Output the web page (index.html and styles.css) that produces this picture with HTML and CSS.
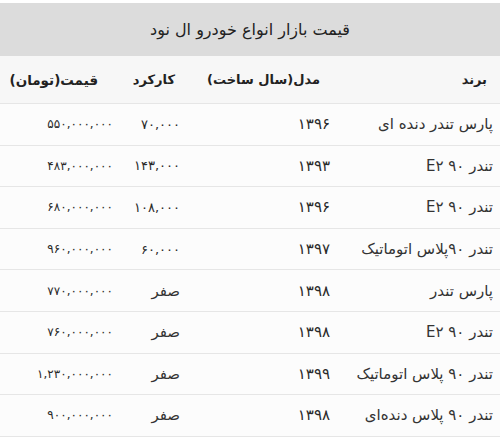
FILE: index.html
```html
<!DOCTYPE html>
<html lang="fa" dir="rtl">
<head>
<meta charset="utf-8">
<title>قیمت بازار انواع خودرو ال نود</title>
<link rel="stylesheet" href="styles.css">
</head>
<body>
<div class="table">
  <div class="title">قیمت بازار انواع خودرو ال نود</div>
  <div class="row head">
    <div class="c brand">برند</div>
    <div class="c model">مدل(سال ساخت)</div>
    <div class="c km">کارکرد</div>
    <div class="c price">قیمت(تومان)</div>
  </div>
  <div class="row">
    <div class="c brand">پارس تندر دنده ای</div>
    <div class="c model num">۱۳۹۶</div>
    <div class="c km num">۷۰,۰۰۰</div>
    <div class="c price num">۵۵۰,۰۰۰,۰۰۰</div>
  </div>
  <div class="row">
    <div class="c brand">تندر ۹۰ E۲</div>
    <div class="c model num">۱۳۹۳</div>
    <div class="c km num">۱۴۳,۰۰۰</div>
    <div class="c price num">۴۸۳,۰۰۰,۰۰۰</div>
  </div>
  <div class="row">
    <div class="c brand">تندر ۹۰ E۲</div>
    <div class="c model num">۱۳۹۶</div>
    <div class="c km num">۱۰۸,۰۰۰</div>
    <div class="c price num">۶۸۰,۰۰۰,۰۰۰</div>
  </div>
  <div class="row">
    <div class="c brand">تندر ۹۰پلاس اتوماتیک</div>
    <div class="c model num">۱۳۹۷</div>
    <div class="c km num">۶۰,۰۰۰</div>
    <div class="c price num">۹۶۰,۰۰۰,۰۰۰</div>
  </div>
  <div class="row">
    <div class="c brand">پارس تندر</div>
    <div class="c model num">۱۳۹۸</div>
    <div class="c km">صفر</div>
    <div class="c price num">۷۷۰,۰۰۰,۰۰۰</div>
  </div>
  <div class="row">
    <div class="c brand">تندر ۹۰ E۲</div>
    <div class="c model num">۱۳۹۸</div>
    <div class="c km">صفر</div>
    <div class="c price num">۷۶۰,۰۰۰,۰۰۰</div>
  </div>
  <div class="row">
    <div class="c brand">تندر ۹۰ پلاس اتوماتیک</div>
    <div class="c model num">۱۳۹۹</div>
    <div class="c km">صفر</div>
    <div class="c price num">۱,۲۳۰,۰۰۰,۰۰۰</div>
  </div>
  <div class="row">
    <div class="c brand">تندر ۹۰ پلاس دنده‌ای</div>
    <div class="c model num">۱۳۹۸</div>
    <div class="c km">صفر</div>
    <div class="c price num">۹۰۰,۰۰۰,۰۰۰</div>
  </div>
</div>
</body>
</html>
```

FILE: styles.css
```css
html, body {
  margin: 0;
  padding: 0;
  background: #ffffff;
}
body {
  font-family: "DejaVu Sans", "Noto Sans", sans-serif;
  color: #333333;
}
.table {
  direction: rtl;
  width: 500px;
  padding-top: 3px;
}
.title {
  height: 53px;
  background: #dcdcdc;
  display: flex;
  align-items: center;
  justify-content: center;
  font-size: 16px;
  color: #222;
}
.row {
  display: grid;
  grid-template-columns: 160px 150px 70px 120px;
  height: 41.6px;
  align-items: center;
  border-bottom: 1px solid #e6e6e6;
  background: #fcfcfc;
  font-size: 15px;
  box-sizing: border-box;
}
.row.head {
  height: 48px;
  background: #f7f7f7;
  font-weight: bold;
  color: #222;
  font-size: 13px;
}
.head .price {
  font-size: 13.5px;
}
.c {
  text-align: right;
  white-space: nowrap;
}
.num {
  font-size: 13px;
  color: #2a2a2a;
}
.model.num {
  font-size: 15px;
}
.price.num {
  font-size: 12px;
  letter-spacing: -0.8px;
}
.brand { padding-right: 7px; }
.model { padding-right: 10px; }
.km { padding-right: 10px; }
.price { padding-right: 7px; }
.head .brand { padding-right: 13px; }
.head .model { padding-right: 20px; }
.head .km { padding-right: 15px; }
.head .price { padding-right: 22px; }
```
